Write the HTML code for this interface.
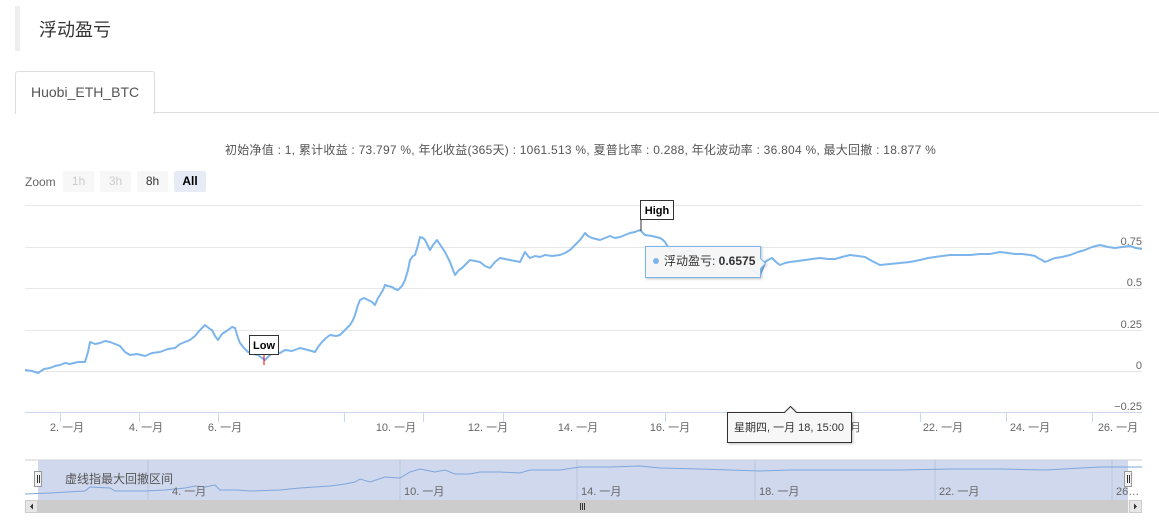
<!DOCTYPE html>
<html><head><meta charset="utf-8"><style>
body{margin:0;width:1159px;height:523px;background:#fff;font-family:"Liberation Sans","Noto Sans CJK SC",sans-serif;position:relative;overflow:hidden}
.t{position:absolute;white-space:nowrap}
</style></head><body>
<div style="position:absolute;left:15px;top:6px;width:5px;height:45px;background:#eee"></div>
<div class="t" style="left:39px;top:16px;font-size:18px;color:#333">浮动盈亏</div>
<div style="position:absolute;left:15px;top:71px;width:138px;height:42px;border:1px solid #ddd;border-bottom:none;border-radius:3px 3px 0 0;background:#fff"></div>
<div style="position:absolute;left:153px;top:112px;width:1006px;height:1px;background:#ddd"></div>
<div class="t" style="left:31px;top:84px;font-size:14px;color:#555">Huobi_ETH_BTC</div>
<div class="t" style="left:225px;top:141px;font-size:12px;color:#555;letter-spacing:0.25px">初始净值 : 1, 累计收益 : 73.797 %, 年化收益(365天) : 1061.513 %, 夏普比率 : 0.288, 年化波动率 : 36.804 %, 最大回撤 : 18.877 %</div>
<div class="t" style="left:25px;top:175px;font-size:12px;color:#666">Zoom</div>
<div class="t" style="left:63px;top:171px;width:31px;height:21px;background:#f7f7f7;border-radius:2px;font-size:12px;color:#ccc;text-align:center;line-height:21px">1h</div>
<div class="t" style="left:100px;top:171px;width:31px;height:21px;background:#f7f7f7;border-radius:2px;font-size:12px;color:#ccc;text-align:center;line-height:21px">3h</div>
<div class="t" style="left:137px;top:171px;width:31px;height:21px;background:#f7f7f7;border-radius:2px;font-size:12px;color:#333;text-align:center;line-height:21px">8h</div>
<div class="t" style="left:174px;top:171px;width:32px;height:21px;background:#e6ebf5;border-radius:2px;font-size:12px;color:#000;font-weight:bold;text-align:center;line-height:21px">All</div>
<svg width="1159" height="523" style="position:absolute;left:0;top:0" font-family="Liberation Sans, Noto Sans CJK SC, sans-serif" font-size="11" fill="#666">
<defs><filter id="sh" x="-10%" y="-10%" width="130%" height="140%"><feDropShadow dx="1" dy="1" stdDeviation="1.2" flood-opacity="0.25"/></filter></defs>
<g stroke="#e6e6e6"><line x1="25" x2="1142" y1="205.5" y2="205.5"/><line x1="25" x2="1142" y1="247.5" y2="247.5"/><line x1="25" x2="1142" y1="288.5" y2="288.5"/><line x1="25" x2="1142" y1="330.5" y2="330.5"/><line x1="25" x2="1142" y1="371.5" y2="371.5"/></g>
<line x1="25" x2="1142" y1="412.5" y2="412.5" stroke="#ccd6eb"/>
<g stroke="#ccd6eb"><line x1="60.5" x2="60.5" y1="412" y2="422"/><line x1="139.5" x2="139.5" y1="412" y2="422"/><line x1="218.5" x2="218.5" y1="412" y2="422"/><line x1="344.5" x2="344.5" y1="412" y2="422"/><line x1="423.5" x2="423.5" y1="412" y2="422"/><line x1="503.5" x2="503.5" y1="412" y2="422"/><line x1="665.5" x2="665.5" y1="412" y2="422"/><line x1="920.5" x2="920.5" y1="412" y2="422"/><line x1="1006.5" x2="1006.5" y1="412" y2="422"/><line x1="1092.5" x2="1092.5" y1="412" y2="422"/></g>
<g text-anchor="middle"><text x="67" y="431">2. 一月</text><text x="146" y="431">4. 一月</text><text x="225" y="431">6. 一月</text><text x="396" y="431">10. 一月</text><text x="488" y="431">12. 一月</text><text x="578" y="431">14. 一月</text><text x="670" y="431">16. 一月</text><text x="850" y="431">一月</text><text x="943" y="431">22. 一月</text><text x="1030" y="431">24. 一月</text><text x="1118" y="431">26. 一月</text></g>
<g text-anchor="end"><text x="1142" y="245">0.75</text><text x="1142" y="286">0.5</text><text x="1142" y="328">0.25</text><text x="1142" y="369">0</text><text x="1142" y="410">−0.25</text></g>
<polyline fill="none" stroke="#7cb5ec" stroke-width="2" stroke-linejoin="round" points="25,370 32,371 38,373 44,369 50,368 55,366 60,365 65,363 70,364 78,362 85,362 88,352 90,342 95,344 100,343 105,341 110,342 115,344 120,346 125,352 130,355 137,354 145,356 152,353 160,352 168,349 175,348 180,344 185,342 190,340 195,336 200,330 205,325 210,329 212,330 215,336 218,340 222,334 228,330 232,327 235,328 238,338 240,343 244,348 248,352 253,354 258,355 262,358 265,360 270,355 275,352 280,353 285,350 292,351 300,348 308,350 315,352 318,347 322,342 326,338 330,335 336,336 340,335 345,330 350,325 353,320 355,315 358,305 360,300 364,298 368,300 372,302 375,305 378,298 380,295 383,290 385,285 388,286 392,287 395,289 398,290 402,286 405,280 408,270 410,260 413,256 415,255 418,245 420,237 423,238 425,240 428,246 430,250 433,245 437,240 441,246 445,252 448,258 450,262 453,270 455,275 459,270 462,268 466,264 470,260 475,261 480,262 485,266 490,268 495,262 500,258 505,259 510,260 515,261 520,262 523,256 525,252 528,256 530,258 535,256 540,257 545,255 552,256 560,255 565,253 570,250 575,245 580,240 583,236 585,233 588,236 592,238 596,239 600,240 605,238 610,236 615,238 620,237 625,235 630,233 635,232 640,230 643,233 645,235 652,236 660,238 663,240 665,242 668,247 670,250 675,252 680,255 685,252 690,250 695,254 700,258 705,259 710,260 720,261 730,262 738,264 745,266 752,270 760,275 763,268 765,262 768,260 772,258 776,262 780,265 785,263 790,262 798,261 805,260 812,259 820,258 828,259 835,259 842,257 850,255 858,256 865,257 872,261 880,265 890,264 900,263 910,262 920,260 928,258 935,257 942,256 950,255 960,255 970,255 980,254 990,254 995,253 1000,252 1008,253 1015,254 1022,254 1030,255 1035,256 1038,258 1042,260 1045,262 1050,260 1055,258 1062,257 1070,255 1078,252 1085,250 1092,247 1100,245 1108,247 1115,248 1122,247 1130,246 1136,248 1142,249"/>
<line x1="641" y1="220" x2="641" y2="231" stroke="#333"/>
<rect x="640.5" y="200.5" width="33" height="19" fill="#fff" stroke="#333"/>
<text x="657" y="214" text-anchor="middle" font-weight="bold" fill="#000">High</text>
<line x1="264" y1="355" x2="264" y2="365" stroke="#e00"/>
<rect x="249.5" y="335.5" width="29" height="19" fill="#fff" stroke="#333"/>
<text x="264" y="349" text-anchor="middle" font-weight="bold" fill="#000">Low</text>
<path d="M645.5,246.5 h115 v12 l5,5 l-5,5 v9 h-115 z" fill="#f7f7f7" fill-opacity="0.93" stroke="#7cb5ec" filter="url(#sh)"/>
<circle cx="656" cy="261" r="3" fill="#7cb5ec"/>
<text x="664" y="265" fill="#333" font-size="12">浮动盈亏: <tspan font-weight="bold">0.6575</tspan></text>
<path d="M727.5,412.5 h57 l6,-6 l6,6 h55 v30 h-124 z" fill="#f7f7f7" stroke="#333" filter="url(#sh)"/>
<text x="789" y="431" text-anchor="middle" fill="#333">星期四, 一月 18, 15:00</text>
<rect x="25" y="460" width="1117" height="40" fill="#fff"/>
<line x1="25" x2="1142" y1="460" y2="460" stroke="#ccc"/>
<rect x="38" y="460" width="1090" height="40" fill="#ccd6eb" fill-opacity="0.95"/>
<g stroke="#b8c4de"><line x1="148" x2="148" y1="460" y2="500"/><line x1="400" x2="400" y1="460" y2="500"/><line x1="577" x2="577" y1="460" y2="500"/><line x1="755" x2="755" y1="460" y2="500"/><line x1="935" x2="935" y1="460" y2="500"/><line x1="1112" x2="1112" y1="460" y2="500"/></g>
<polyline fill="none" stroke="#7ea6dd" stroke-width="1" points="25,494 50,493 85,491 90,487 110,488 115,491 145,491 165,490 185,488 195,486 205,487 215,485 220,490 237,490 250,491 280,490 300,488 330,486 345,484 355,482 360,479 370,482 385,477 400,478 410,472 420,469 435,472 445,470 455,474 470,474 480,472 500,472 520,473 530,470 560,470 580,467 610,467 640,466 660,468 700,469 760,471 790,470 850,470 900,470 950,469 1000,469 1045,470 1100,467 1142,467"/>
<text x="65" y="483" fill="#555" font-size="12">虚线指最大回撤区间</text>
<g text-anchor="start" fill="#666"><text x="172" y="495">4. 一月</text><text x="404" y="495">10. 一月</text><text x="581" y="495">14. 一月</text><text x="759" y="495">18. 一月</text><text x="939" y="495">22. 一月</text><text x="1116" y="495">26…</text></g>
<rect x="34.5" y="471.5" width="7" height="15" fill="#f2f2f2" stroke="#999"/>
<line x1="37.5" x2="37.5" y1="475" y2="483" stroke="#333"/><line x1="39.5" x2="39.5" y1="475" y2="483" stroke="#333"/>
<rect x="1124.5" y="471.5" width="7" height="15" fill="#f2f2f2" stroke="#999"/>
<line x1="1127.5" x2="1127.5" y1="475" y2="483" stroke="#333"/><line x1="1129.5" x2="1129.5" y1="475" y2="483" stroke="#333"/>
<rect x="25" y="500" width="1117" height="13" fill="#f2f2f2"/>
<rect x="38" y="500" width="1090" height="13" fill="#ccc"/>
<rect x="25.5" y="500.5" width="12" height="12" fill="#e6e6e6" stroke="#ccc"/>
<path d="M30,506.5 l3,-3 v6 z" fill="#333"/>
<rect x="1129.5" y="500.5" width="12" height="12" fill="#e6e6e6" stroke="#ccc"/>
<path d="M1137,506.5 l-3,-3 v6 z" fill="#333"/>
<g stroke="#333"><line x1="580.5" x2="580.5" y1="503" y2="510"/><line x1="582.5" x2="582.5" y1="503" y2="510"/><line x1="584.5" x2="584.5" y1="503" y2="510"/></g>
</svg>
</body></html>
